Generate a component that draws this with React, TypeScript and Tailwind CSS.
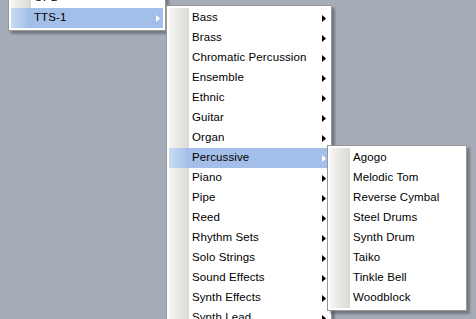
const Arrow = ({ white }: { white?: boolean }) => (
  <svg width="4" height="7" viewBox="0 0 4 7" className="shrink-0">
    <path d="M0 0 L4 3.5 L0 7 Z" fill={white ? "#ffffff" : "#000000"} />
  </svg>
);

type Item = { label: string; sub?: boolean; active?: boolean };

function Menu({
  items,
  className,
}: {
  items: Item[];
  className: string;
}) {
  return (
    <div
      className={`absolute border border-[#979797] bg-white p-[2px] shadow-[3px_3px_2px_rgba(60,64,72,0.45)] ${className}`}
    >
      <div className="relative">
        <div className="absolute left-0 top-0 bottom-0 w-[20px] bg-gradient-to-r from-[#f6f5f2] to-[#dbd9d3]" />
        {items.map((it) => (
          <div
            key={it.label}
            className={`relative flex h-[20px] items-center pr-[3px] ${
              it.active
                ? "bg-gradient-to-r from-[#c9dbf3] via-[#a3bee8] via-[12%] to-[#a3bee8]"
                : ""
            }`}
          >
            <span className="flex-1 pl-[23px] text-[11.5px] leading-none tracking-[0.1px] text-black">
              {it.label}
            </span>
            {it.sub && <Arrow white={it.active} />}
          </div>
        ))}
      </div>
    </div>
  );
}

const instruments: Item[] = [
  "Bass",
  "Brass",
  "Chromatic Percussion",
  "Ensemble",
  "Ethnic",
  "Guitar",
  "Organ",
  "Percussive",
  "Piano",
  "Pipe",
  "Reed",
  "Rhythm Sets",
  "Solo Strings",
  "Sound Effects",
  "Synth Effects",
  "Synth Lead",
].map((l) => ({ label: l, sub: true, active: l === "Percussive" }));

const percussive: Item[] = [
  "Agogo",
  "Melodic Tom",
  "Reverse Cymbal",
  "Steel Drums",
  "Synth Drum",
  "Taiko",
  "Tinkle Bell",
  "Woodblock",
].map((l) => ({ label: l }));

export default function App() {
  return (
    <div
      className="relative h-[319px] w-[476px] overflow-hidden bg-[#a5acb7]"
      style={{ fontFamily: '"Liberation Sans", "Noto Sans CJK JP", sans-serif' }}
    >
      <Menu
        className="left-[8px] top-[-15px] w-[158px]"
        items={[
          { label: "OPL" },
          { label: "TTS-1", sub: true, active: true },
        ]}
      />
      <Menu className="left-[166px] top-[5px] w-[166px]" items={instruments} />
      <Menu className="left-[327px] top-[145px] w-[140px]" items={percussive} />
    </div>
  );
}
